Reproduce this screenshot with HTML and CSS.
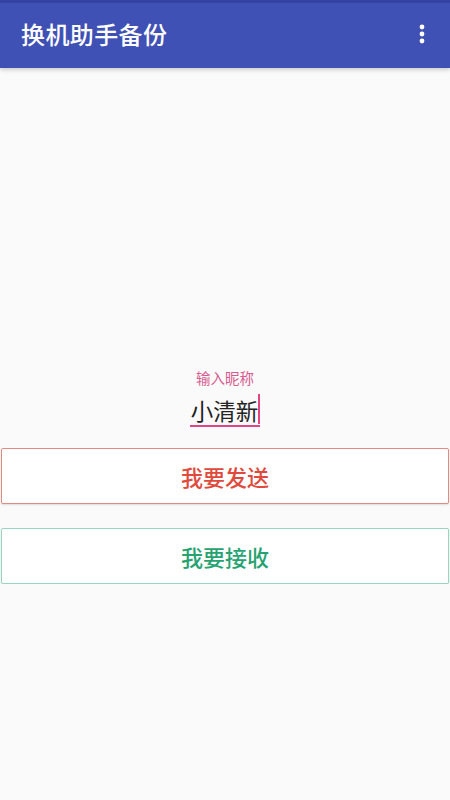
FILE: index.html
```html
<!DOCTYPE html>
<html lang="zh">
<head>
<meta charset="utf-8">
<title>换机助手备份</title>
<link rel="stylesheet" href="styles.css">
</head>
<body>
<header class="appbar">
  <div class="status"></div>
  <div class="toolbar">
    <h1 class="title">换机助手备份</h1>
    <div class="menu" aria-label="更多">
      <svg width="8" height="24" viewBox="0 0 8 24"><circle cx="4" cy="5" r="2.4" fill="#fff"/><circle cx="4" cy="12" r="2.4" fill="#fff"/><circle cx="4" cy="19" r="2.4" fill="#fff"/></svg>
    </div>
  </div>
</header>
<main class="content">
  <div class="field">
    <div class="label">输入昵称</div>
    <div class="input"><span class="value">小清新</span><span class="cursor"></span></div>
  </div>
  <button class="btn btn-send">我要发送</button>
  <button class="btn btn-recv">我要接收</button>
</main>
</body>
</html>
```

FILE: styles.css
```css
* { box-sizing: border-box; }
html, body {
  margin: 0;
  padding: 0;
  background: #fafafa;
  font-family: "Noto Sans CJK SC", "Noto Sans", Roboto, sans-serif;
}
.appbar {
  background: #3f51b5;
  box-shadow: 0 2px 4px rgba(0,0,0,0.18);
  position: relative;
  z-index: 1;
}
.status {
  height: 3px;
  background: #3443a3;
}
.toolbar {
  height: 65px;
  display: flex;
  align-items: center;
  justify-content: space-between;
  padding: 0 24px 0 21px;
}
.title {
  margin: 0;
  color: #fff;
  font-size: 24px;
  font-weight: 500;
  line-height: 1;
  letter-spacing: 0.4px;
  padding-bottom: 3px;
}
.menu {
  display: flex;
  align-items: center;
  padding-bottom: 4px;
}
.menu svg { display: block; }
.content {
  display: flex;
  flex-direction: column;
  align-items: center;
  padding-top: 300px;
}
.field {
  display: flex;
  flex-direction: column;
  align-items: center;
}
.label {
  color: #d95a8f;
  font-size: 14.5px;
  line-height: 20px;
}
.input {
  margin-top: 6px;
  display: flex;
  align-items: center;
  border-bottom: 2px solid #e2457f;
  height: 33px;
  padding-left: 1px;
}
.value {
  color: #222;
  font-size: 22.5px;
  line-height: 30px;
}
.cursor {
  width: 2px;
  height: 30px;
  background: #e2457f;
  margin-left: 0;
  margin-top: -2px;
}
.btn {
  display: block;
  width: 448px;
  height: 56px;
  margin: 0 1px;
  background: #fff;
  border: 1px solid;
  border-radius: 2px;
  font-family: inherit;
  font-size: 22px;
  font-weight: 500;
  padding: 0;
  box-shadow: 0 1px 2px rgba(0,0,0,0.12);
}
.btn-send {
  margin-top: 21px;
  border-color: #e48a83;
  color: #e04a3c;
}
.btn-recv {
  margin-top: 24px;
  border-color: #98d6c0;
  color: #27a371;
}
```
